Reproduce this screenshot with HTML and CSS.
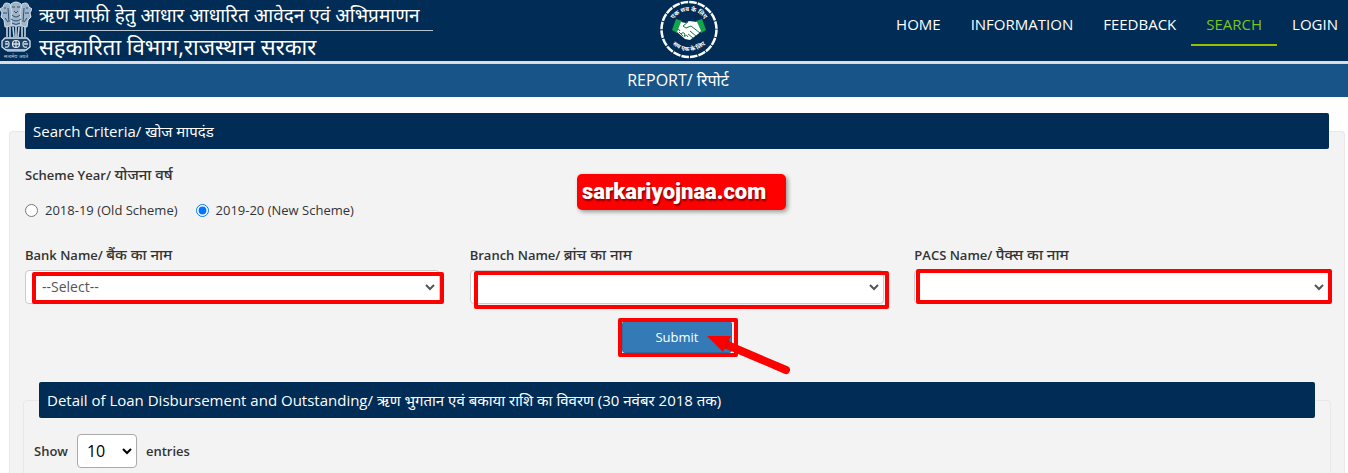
FILE: index.html
```html
<!DOCTYPE html>
<html lang="en">
<head>
<meta charset="utf-8">
<meta name="viewport" content="width=device-width, initial-scale=1">
<title>Report</title>
<link rel="stylesheet" href="styles.css">
</head>
<body>
<header class="site-header">
  <div class="brand">
    <svg class="emblem" viewBox="0 0 32 60" aria-hidden="true">
      <g fill="#9fb4c7" stroke="#d3dfe9" stroke-width="1">
        <path d="M11 4Q16 0 21 4L23 14L21 26H11L9 14Z"/>
        <path d="M10 4Q4 1 3 7L0 9L2 13L1 17L4 20L5 27L11 26L12 12Z"/>
        <path d="M22 4Q28 1 29 7L32 9L30 13L31 17L28 20L27 27L21 26L20 12Z"/>
      </g>
      <g stroke="#2b5075" stroke-width="1" fill="none">
        <path d="M12 7h3M17 7h3M14 11l2 2 2-2M12 15q4 4 8 0M11 19q5 4 10 0M12 23q4 3 8 0M4 8h2M26 8h2M3 13h4M25 13h4M8 8l1 14M24 8l-1 14M5 18l3 4M27 18l-3 4"/>
      </g>
      <path d="M7 26v11M10 27v10M13 27l1 10M16 26v11M19 27l-1 10M22 27v10M25 26v11" stroke="#c4d2de" stroke-width="1.6" fill="none"/>
      <path d="M5 38h22l3 3v6l-4 3H6l-4-3v-6z" fill="#1c426a" stroke="#dbe5ee" stroke-width="1.3"/>
      <circle cx="16" cy="44" r="3.5" fill="none" stroke="#e4edf4" stroke-width="1.2"/>
      <path d="M16 41v6M13 44h6M5 42q4-2 4 2t-4 3M8 44H5M27 42q-4-2-4 2t4 3M24 44h4" fill="none" stroke="#d0dce6" stroke-width="1.3"/>
      <path d="M7 51h18" stroke="#b4c5d4" stroke-width="1.4"/>
      <text class="motto" x="16" y="58" text-anchor="middle">सत्यमेव जयते</text>
    </svg>
    <div class="brand-text">
      <div class="brand-title">ऋण माफ़ी हेतु आधार आधारित आवेदन एवं अभिप्रमाणन</div>
      <div class="brand-dept">सहकारिता विभाग,राजस्थान सरकार</div>
    </div>
  </div>
  <svg class="coop" viewBox="0 0 60 60" role="img" aria-label="Cooperative logo">
    <defs>
      <path id="arc-top" d="M11 30A19 19 0 0 1 49 30"/>
      <path id="arc-bottom" d="M7 28A23 23 0 0 0 53 28"/>
    </defs>
    <circle cx="30" cy="29.500" r="27.500" fill="none" stroke="#fff" stroke-width="2.500" stroke-dasharray="7.600 1.040"/>
    <text class="coop-text" text-anchor="middle"><textPath href="#arc-top" startOffset="50%">एक सब के लिए</textPath></text>
    <text class="coop-text" text-anchor="middle"><textPath href="#arc-bottom" startOffset="50%">सब एक के लिए</textPath></text>
    <path d="M17 19l6 2-5 12-5-3zM43 19l-6 2 5 12 5-3z" fill="#12a64b"/>
    <path d="M22 22l5 1 3-2 8 1 4 9-3 3-8 6-5-1-8-7z" fill="#fff"/>
    <path d="M29 22l-5 4 3 2 5-2 9 7M20 32l4 4M18 30q2-2 3 1M22 34q2-3 4 0l-1 3M26 36q2-2 3 1M31 31l6 5M29 34l5 4" fill="none" stroke="#167a48" stroke-width="1"/>
  </svg>
  <nav class="nav">
    <a class="nav-link" href="#">HOME</a>
    <a class="nav-link" href="#">INFORMATION</a>
    <a class="nav-link" href="#">FEEDBACK</a>
    <a class="nav-link active" href="#">SEARCH</a>
    <a class="nav-link" href="#">LOGIN</a>
  </nav>
</header>
<h1 class="page-title">REPORT/ रिपोर्ट</h1>
<main class="content">
  <fieldset class="panel">
    <legend class="panel-title">Search Criteria/ खोज मापदंड</legend>
    <div class="scheme" role="radiogroup" aria-labelledby="scheme-label">
      <div class="label" id="scheme-label">Scheme Year/ <span class="hindi">योजना वर्ष</span></div>
      <div class="radios">
        <label class="radio"><input type="radio" name="scheme">2018-19 (Old Scheme)</label>
        <label class="radio"><input type="radio" name="scheme" checked>2019-20 (New Scheme)</label>
      </div>
      <div class="watermark">sarkariyojnaa.com</div>
    </div>
    <div class="fields">
      <div class="field">
        <label class="label" for="bank">Bank Name/ <span class="hindi">बैंक का नाम</span></label>
        <div class="control">
          <select class="select" id="bank"><option>--Select--</option></select>
          <svg class="chevron" viewBox="0 0 10 7" aria-hidden="true"><path d="M1 1l4 4 4-4"/></svg>
          <span class="mark mark-bank"></span>
        </div>
      </div>
      <div class="field">
        <label class="label" for="branch">Branch Name/ <span class="hindi">ब्रांच का नाम</span></label>
        <div class="control">
          <select class="select" id="branch"><option></option></select>
          <svg class="chevron" viewBox="0 0 10 7" aria-hidden="true"><path d="M1 1l4 4 4-4"/></svg>
          <span class="mark mark-branch"></span>
        </div>
      </div>
      <div class="field">
        <label class="label" for="pacs">PACS Name/ <span class="hindi">पैक्स का नाम</span></label>
        <div class="control">
          <select class="select" id="pacs"><option></option></select>
          <svg class="chevron" viewBox="0 0 10 7" aria-hidden="true"><path d="M1 1l4 4 4-4"/></svg>
          <span class="mark mark-pacs"></span>
        </div>
      </div>
    </div>
    <div class="actions">
      <div class="submit-wrap">
        <button class="submit" type="submit">Submit</button>
        <span class="mark mark-submit"></span>
        <svg class="arrow" viewBox="0 0 84 42" aria-hidden="true">
          <path d="M18 10L79 36" stroke="#f00" stroke-width="8" stroke-linecap="round"/>
          <path d="M0 2l24 0-8 16z" fill="#f00"/>
          <path d="M22 6l-4 9" stroke="#a11a28" stroke-width="1"/>
        </svg>
      </div>
    </div>
    <fieldset class="panel panel-inner">
      <legend class="panel-title">Detail of Loan Disbursement and Outstanding/ ऋण भुगतान एवं बकाया राशि का विवरण (30 नवंबर 2018 तक)</legend>
      <label class="entries">Show
        <span class="control">
          <select class="select select-small"><option>10</option></select>
          <svg class="chevron chevron-dark" viewBox="0 0 10 7" aria-hidden="true"><path d="M1 1l4 4 4-4"/></svg>
        </span>
        entries</label>
    </fieldset>
  </fieldset>
</main>
</body>
</html>
```
FILE: styles.css
```css
* { box-sizing: border-box; }
body {
  margin: 0;
  background: #fff;
  color: #333;
  font: 13px/20px "Open Sans", "Noto Sans", sans-serif;
}
.site-header {
  display: grid;
  grid-template-columns: 1fr 60px 1fr;
  align-items: start;
  height: 64px;
  background: #002c55;
  border-bottom: 3px solid #ddd;
}
.brand { display: flex; gap: 7px; color: #fff; white-space: nowrap; }
.emblem { width: 32px; height: 60px; flex: none; }
.motto { font-size: 5px; fill: #c4d2de; }
.brand-text { line-height: 30px; }
.brand-title { border-bottom: 1px solid #b6c3d0; padding-right: 14px; font-size: 19px; }
.brand-dept { font-size: 22px; }
.coop { width: 60px; height: 60px; margin-left: 15px; }
.coop-text { font-size: 6px; font-weight: 700; fill: #fff; }
.nav { display: flex; justify-content: flex-end; padding-top: 4px; font-size: 15px; }
.nav-link {
  height: 42px;
  padding: 10px 15px 0;
  border-bottom: 2px solid transparent;
  color: #fff;
  text-decoration: none;
}
.nav-link:last-child { padding-right: 10px; }
.nav-link.active { color: #7fc31c; border-color: #98c000; }
.page-title {
  margin: 0;
  background: #185488;
  color: #fff;
  font-size: 16px;
  font-weight: 400;
  line-height: 33px;
  text-align: center;
  padding-left: 8px;
}
.content { padding: 16px 3px 0 9px; }
.panel {
  min-width: 0;
  margin: 0;
  padding: 0 15px;
  border: 1px solid #e8e8e8;
  border-radius: 4px;
  background: #f3f3f3;
}
.panel-title {
  width: 100%;
  margin-bottom: 13px;
  padding: 0 8px;
  border-radius: 2px;
  background: #002c55;
  color: #fff;
  font-size: 15px;
  line-height: 36px;
}
.label { display: block; font-weight: 600; line-height: 24px; }
.hindi { font-size: 15px; font-weight: 500; }
.scheme { position: relative; margin-bottom: 22px; }
.radios { display: flex; gap: 18px; padding-top: 13px; }
.radio { display: flex; align-items: center; gap: 7px; }
.radio input { width: 13px; height: 13px; margin: 0; }
.watermark {
  position: absolute;
  left: 552px;
  top: 12px;
  width: 209px;
  padding: 0 5px;
  border-radius: 5px;
  background: #f00;
  box-shadow: 2px 2px 4px #999;
  color: #fff;
  font: 900 22px/36px Roboto, sans-serif;
  text-shadow: 1px 2px 2px #800;
}
.fields { display: grid; grid-template-columns: repeat(3, 1fr); gap: 30px; }
.field .label { margin-bottom: 3px; }
.control { position: relative; display: block; }
.select {
  display: block;
  width: 100%;
  height: 34px;
  padding: 0 16px;
  appearance: none;
  border: 1px solid #ccc;
  border-radius: 4px;
  background: #fff;
  color: #555;
  font: inherit;
  font-size: 14px;
}
.chevron {
  position: absolute;
  right: 5px;
  top: 14px;
  width: 10px;
  height: 7px;
  fill: none;
  stroke: #555;
  stroke-width: 2;
  pointer-events: none;
}
.mark { position: absolute; border: 4px solid #f00; border-radius: 2px; pointer-events: none; }
.mark-bank { inset: 2px -4px 0 7px; }
.mark-branch { inset: 1px -5px -5px 4px; }
.mark-pacs { inset: -1px -3px 0 2px; }
.actions { display: flex; justify-content: center; padding: 17px 0 29px; }
.submit-wrap { position: relative; }
.submit {
  display: block;
  width: 110px;
  height: 32px;
  border: 1px solid #2e6da4;
  border-radius: 3px;
  background: #337ab7;
  color: #fff;
  font: inherit;
}
.mark-submit { inset: -3px -6px -4px -4px; }
.arrow { position: absolute; left: 85px; top: 13px; width: 84px; height: 42px; }
.panel-inner { margin: 0 -2px; padding-bottom: 20px; }
.panel-inner > .panel-title { margin-bottom: 16px; }
.entries { display: flex; align-items: center; gap: 9px; margin-left: -5px; font-weight: 600; }
.select-small { width: 60px; padding: 0 9px; font-size: 16px; font-weight: 400; color: #000; border-color: #aaa; }
.chevron-dark { stroke: #000; }
```
